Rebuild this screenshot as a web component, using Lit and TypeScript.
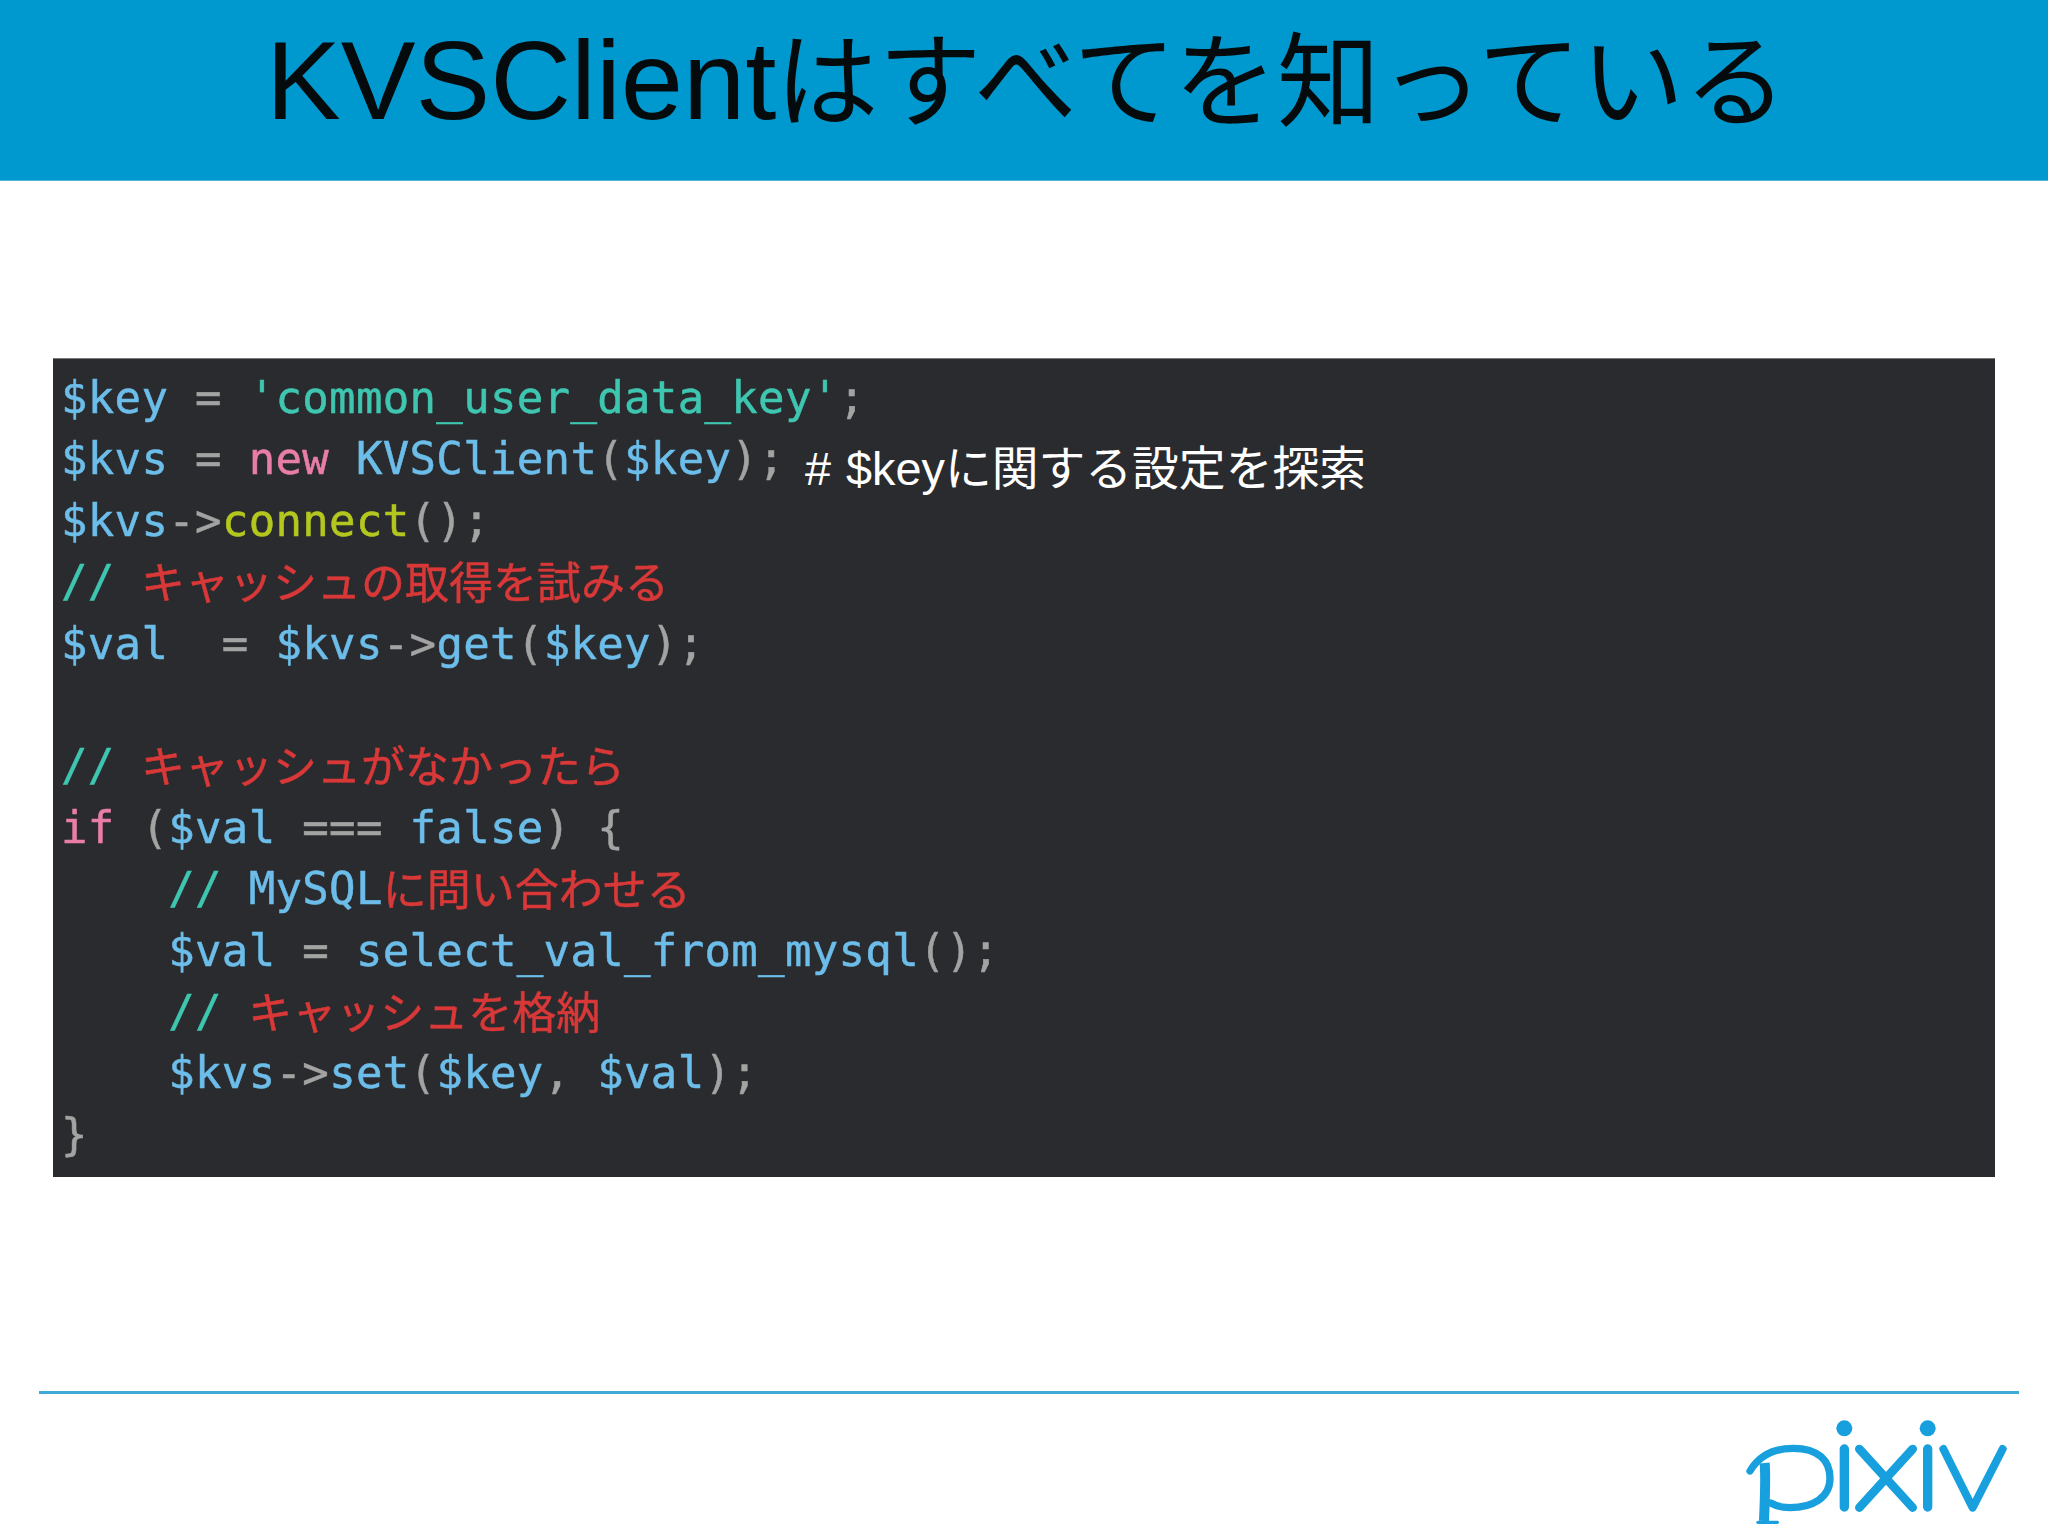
import { LitElement, html, css } from "lit";
import { customElement } from "lit/decorators.js";

type Tok = [string, string];
const b = "b", t = "t", g = "g", p = "p", l = "l", r = "r";
const LINES: Tok[][] = [
  [["$key", b], [" = ", g], ["'common_user_data_key'", t], [";", g]],
  [["$kvs", b], [" = ", g], ["new", p], [" KVSClient", b], ["(", g], ["$key", b], [");", g]],
  [["$kvs", b], ["->", g], ["connect", l], ["();", g]],
  [["//", t], [" キャッシュの取得を試みる", r]],
  [["$val", b], ["  = ", g], ["$kvs", b], ["->", g], ["get", b], ["(", g], ["$key", b], [");", g]],
  [],
  [["//", t], [" キャッシュがなかったら", r]],
  [["if", p], [" (", g], ["$val", b], [" === ", g], ["false", b], [") {", g]],
  [["    ", g], ["//", t], [" MySQL", b], ["に問い合わせる", r]],
  [["    ", g], ["$val", b], [" = ", g], ["select_val_from_mysql", b], ["();", g]],
  [["    ", g], ["//", t], [" キャッシュを格納", r]],
  [["    ", g], ["$kvs", b], ["->", g], ["set", b], ["(", g], ["$key", b], [", ", g], ["$val", b], [");", g]],
  [["}", g]],
];

@customElement("app-root")
export class AppRoot extends LitElement {
  static styles = css`
    :host { display: block; width: 2048px; height: 1536px; background: #fff; overflow: hidden; }
    .slide { display: flex; flex-direction: column; height: 1536px; }
    .head {
      height: 181px; box-sizing: border-box; background: #0099cf; border-bottom: 1px solid #4db5dc;
      padding: 0 0 16px 5px; display: flex; align-items: center; justify-content: center;
    }
    h1 {
      margin: 0; font: 400 112px/159px "Liberation Sans", "Noto Sans CJK JP", sans-serif;
      color: #050a0c; white-space: nowrap; filter: blur(0.4px);
    }
    .jp { font-size: 103px; margin-left: -1px; }
    .panel {
      position: relative; margin: 177px 53px 0 53px; height: 819px; box-sizing: border-box;
      background: #2a2b2e; padding: 8px 0 0 8px; border-top: 1px solid #77787a;
    }
    .code { filter: blur(0.7px); }
    .ln {
      height: 61.4px; line-height: 61.4px; white-space: pre;
      font-family: "DejaVu Sans Mono", "Noto Sans CJK JP", monospace; font-size: 44px;
      letter-spacing: 0.32px; -webkit-text-stroke: 0.5px currentColor;
    }
    .b { color: #6cbde9; }
    .t { color: #3fc6b0; }
    .g { color: #a3a3a3; }
    .p { color: #e87ea8; }
    .l { color: #b3c71f; }
    .r { color: #d93838; vertical-align: -1.5px; letter-spacing: 0; }
    .note {
      position: absolute; left: 752px; top: 78px; margin: 0; color: #fff; white-space: nowrap;
      font: 400 46.8px/64px "Liberation Sans", "Noto Sans CJK JP", sans-serif; word-spacing: 2px;
    }
    .rule { height: 3px; margin: 214px 29px 0 39px; background: #3fa9d8; }
    .foot { display: flex; justify-content: flex-end; padding-right: 40px; margin-top: 25px; }
    .logo { width: 262px; height: 105px; display: block; filter: blur(0.6px); }
  `;

  render() {
    return html`
      <div class="slide">
        <header class="head"><h1>KVSClient<span class="jp">はすべてを知っている</span></h1></header>
        <section class="panel">
          <div class="code">
            ${LINES.map((ln) => html`<div class="ln">${ln.map(([s, c]) => html`<span class="${c}">${s}</span>`)}</div>`)}
          </div>
          <p class="note"># $keyに関する設定を探索</p>
        </section>
        <div class="rule"></div>
        <footer class="foot">
          <svg class="logo" viewBox="140 150 786 315" fill="none" stroke="#18a0de" stroke-linecap="round" aria-label="pixiv">
            <path d="M152 306 C178 262 222 238 282 238 C356 238 392 274 392 328 C392 386 340 416 272 416 C250 416 232 412 214 402" stroke-width="22"/>
            <path d="M196 282 C200 330 196 400 194 456" stroke-width="30" stroke-linecap="butt"/>
            <path d="M176 460 H234" stroke-width="10"/>
            <circle cx="435" cy="178" r="24" fill="#18a0de" stroke="none"/>
            <circle cx="685" cy="178" r="24" fill="#18a0de" stroke="none"/>
            <path d="M435 240 V414 M685 240 V414" stroke-width="28"/>
            <path d="M480 240 L640 416 M640 240 L480 416" stroke-width="26"/>
            <path d="M732 240 L820 416 L910 240" stroke-width="24" stroke-linejoin="round"/>
          </svg>
        </footer>
      </div>
    `;
  }
}
